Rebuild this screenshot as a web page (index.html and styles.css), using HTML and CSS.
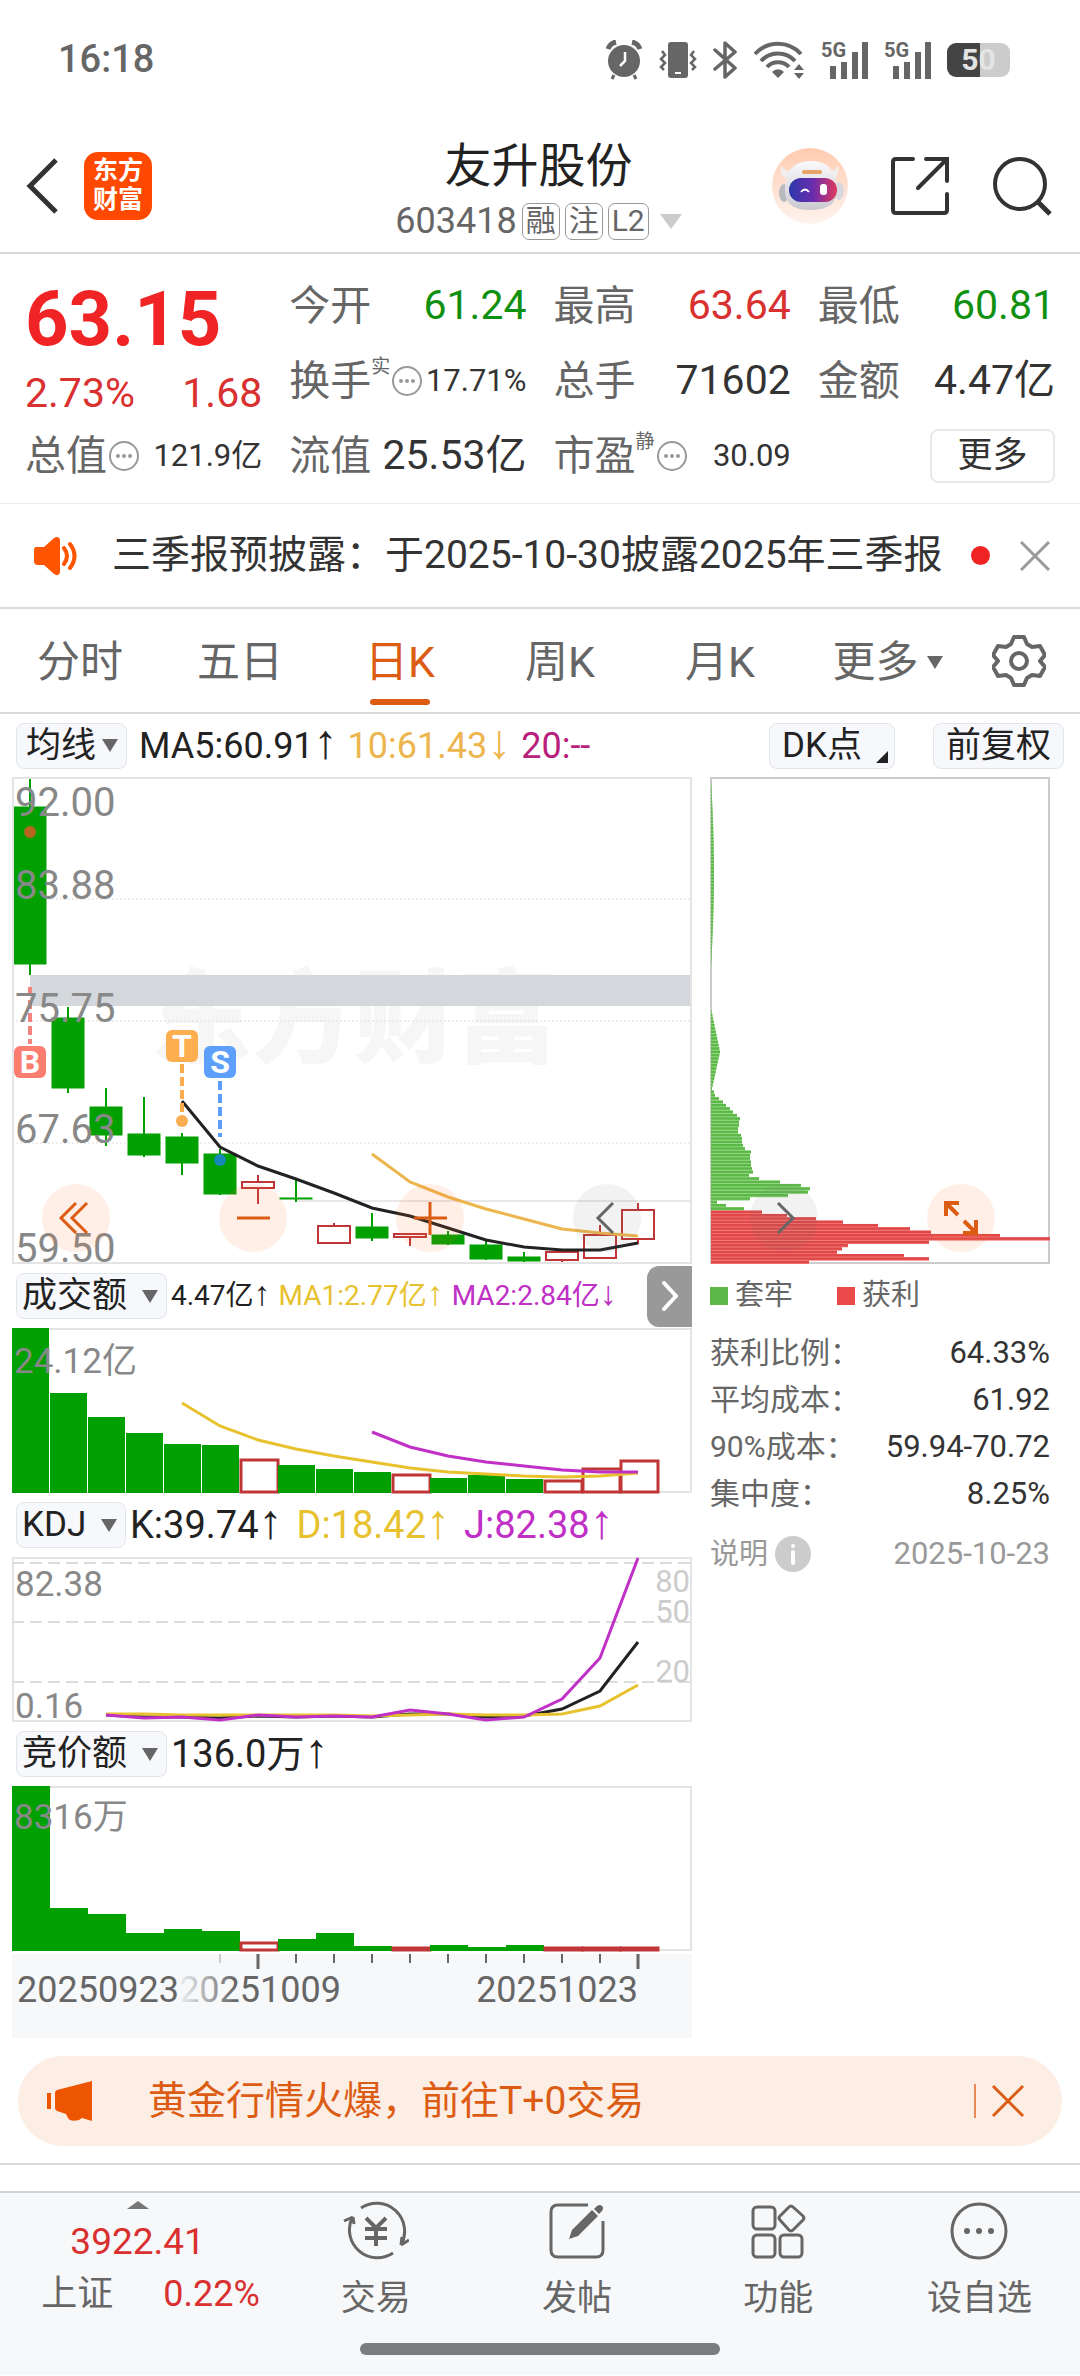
FILE: index.html
```html
<!doctype html>
<html lang="zh-CN">
    <head>
        <meta charset="UTF-8" />
        <meta name="viewport" content="width=device-width, initial-scale=1.0" />
        <title>友升股份 603418</title>
        <link rel="stylesheet" href="styles.css">
    </head>
    <body>
        <div class="status-bar">
            <span class="clock">16:18</span>
            <div class="status-icons">
                <svg width="38" height="40" viewBox="0 0 38 40">
                    <circle cx="19" cy="21" r="16" fill="#666" />
                    <path d="M3 9a11 11 0 0 1 8-7M35 9a11 11 0 0 0-8-7" stroke="#666" stroke-width="5" fill="none" />
                    <path d="M9 35l-2 4M29 35l2 4" stroke="#666" stroke-width="3" />
                    <path d="M20 12v9l-5 5" stroke="#fff" stroke-width="2.5" fill="none" />
                </svg>
                <svg width="38" height="38" viewBox="0 0 38 38">
                    <rect x="9" y="1" width="20" height="36" rx="3" fill="#666" />
                    <path d="M16 32h6" stroke="#fff" stroke-width="2" />
                    <path d="M3 10l3 4-4 4 4 4-4 4 3 3M35 10l-3 4 4 4-4 4 4 4-3 3" stroke="#666" stroke-width="2.5" fill="none" />
                </svg>
                <svg width="24" height="38" viewBox="0 0 24 38">
                    <path d="M2 9l20 18-10 9V2l10 9L2 28" stroke="#666" stroke-width="3.5" fill="none" stroke-linejoin="round" stroke-linecap="round" />
                </svg>
                <svg width="52" height="38" viewBox="0 0 52 38">
                    <g stroke="#666" stroke-width="4" fill="none">
                        <path d="M2 13a31 31 0 0 1 46 0M8 20a23 23 0 0 1 34 0M14 26a15 15 0 0 1 22 0" />
                    </g>
                    <path d="M19 31a8 8 0 0 1 12 0l-6 6z" fill="#666" />
                    <path d="M41 29l5-6 5 6zM41 32l5 6 5-6z" fill="#666" />
                </svg>
                <div class="signal">
                    <span>5G</span>
                    <svg width="38" height="38" viewBox="0 0 38 38">
                        <path d="M3 25v13M14 21v17M25 11v27M35 1v37" stroke="#666" stroke-width="6" />
                    </svg>
                </div>
                <div class="signal">
                    <span>5G</span>
                    <svg width="38" height="38" viewBox="0 0 38 38">
                        <path d="M3 25v13M14 21v17M25 11v27M35 1v37" stroke="#666" stroke-width="6" />
                    </svg>
                </div>
                <div class="battery"><span>50</span></div>
            </div>
        </div>

        <header class="header">
            <div class="header-left">
                <button class="icon-button" aria-label="返回">
                    <svg width="36" height="56" viewBox="0 0 36 56">
                        <path d="M31 2L5 28l26 26" stroke="#333" stroke-width="5" fill="none" />
                    </svg>
                </button>
                <a class="logo" href="#">东方<br>财富</a>
            </div>
            <div class="stock">
                <h1>友升股份</h1>
                <button class="stock-code">
                    <span>603418</span>
                    <span class="tag">融</span>
                    <span class="tag">注</span>
                    <span class="tag">L2</span>
                    <svg width="22" height="15" viewBox="0 0 22 15"><path d="M0 0h22L11 15z" fill="#ccc" /></svg>
                </button>
            </div>
            <div class="header-right">
                <button class="icon-button" aria-label="智能助手">
                    <svg width="76" height="76" viewBox="0 0 76 76">
                        <defs>
                            <linearGradient id="halo" x1="0" y1="0" x2="0" y2="1">
                                <stop offset="0" stop-color="#ffcbb0" />
                                <stop offset="1" stop-color="#fff4ee" />
                            </linearGradient>
                            <linearGradient id="shell" x1="0" y1="0" x2="0" y2="1">
                                <stop offset="0" stop-color="#fafafc" />
                                <stop offset="1" stop-color="#c9c9d0" />
                            </linearGradient>
                            <linearGradient id="visor" x1="0" y1="0" x2="1" y2="0">
                                <stop offset="0" stop-color="#2c38a8" />
                                <stop offset="0.5" stop-color="#6a2cae" />
                                <stop offset="1" stop-color="#e03a5c" />
                            </linearGradient>
                        </defs>
                        <circle cx="38" cy="38" r="38" fill="url(#halo)" />
                        <ellipse cx="12" cy="45" rx="5" ry="9" fill="#b9b9c0" />
                        <ellipse cx="67" cy="43" rx="5" ry="9" fill="#d8d8de" />
                        <path d="M9 17q2 5 9 6l-5 8q-6-5-4-14zM66 17q-1 5-8 6l5 8q5-6 3-14z" fill="#f3eeee" />
                        <path d="M13 44q-1-31 26-31 25 0 26 28 1 21-27 21-24 0-25-18z" fill="url(#shell)" />
                        <rect x="30" y="22" width="20" height="4" rx="2" fill="#e8a468" />
                        <rect x="17" y="30" width="48" height="24" rx="12" fill="url(#visor)" />
                        <path d="M29 44q4-5 8 0" stroke="#fff" stroke-width="2" fill="none" />
                        <rect x="48" y="36" width="7" height="11" rx="3" fill="#fff" />
                    </svg>
                </button>
                <button class="icon-button" aria-label="分享">
                    <svg width="60" height="60" viewBox="0 0 60 60">
                        <path d="M23 3H6q-3 0-3 3v48q0 3 3 3h48q3 0 3-3V38M36 3h21v22M57 3L28 32" stroke="#333" stroke-width="4" fill="none" stroke-linecap="round" />
                    </svg>
                </button>
                <button class="icon-button" aria-label="搜索">
                    <svg width="60" height="60" viewBox="0 0 60 60">
                        <circle cx="28" cy="28" r="25" stroke="#333" stroke-width="4" fill="none" />
                        <path d="M46 46l12 12" stroke="#333" stroke-width="5" />
                    </svg>
                </button>
            </div>
        </header>

        <section class="quote">
            <div class="price up">
                <strong>63.15</strong>
                <div class="change"><span>2.73%</span><span>1.68</span></div>
            </div>
            <div class="stat"><span>今开</span><b class="down">61.24</b></div>
            <div class="stat"><span>最高</span><b class="up">63.64</b></div>
            <div class="stat"><span>最低</span><b class="down">60.81</b></div>
            <div class="stat">
                <span>换手<sup>实</sup></span>
                <i class="dots"></i>
                <b class="small">17.71%</b>
            </div>
            <div class="stat"><span>总手</span><b>71602</b></div>
            <div class="stat"><span>金额</span><b>4.47亿</b></div>
            <div class="stat">
                <span>总值</span>
                <i class="dots"></i>
                <b class="small">121.9亿</b>
            </div>
            <div class="stat"><span>流值</span><b>25.53亿</b></div>
            <div class="stat">
                <span>市盈<sup>静</sup></span>
                <i class="dots"></i>
                <b class="small">30.09</b>
            </div>
            <div class="stat more"><button>更多</button></div>
        </section>

        <section class="notice">
            <svg width="46" height="40" viewBox="0 0 46 40">
                <path d="M2 11h8l10-9q5-3 6 2v32q-1 5-6 2l-10-9H4q-4 0-4-4V15q0-4 2-4z" fill="#ff5500" />
                <path d="M30 12q6 8 0 16M36 8q9 12 0 24" stroke="#ff5500" stroke-width="4" fill="none" stroke-linecap="round" />
            </svg>
            <a href="#">三季报预披露：于2025-10-30披露2025年三季报</a>
            <i class="dot"></i>
            <button class="icon-button" aria-label="关闭">
                <svg width="30" height="30" viewBox="0 0 30 30"><path d="M1 1l28 28M29 1L1 29" stroke="#999" stroke-width="3" /></svg>
            </button>
        </section>

        <nav class="tabs">
            <button>分时</button>
            <button>五日</button>
            <button class="active">日K</button>
            <button>周K</button>
            <button>月K</button>
            <button>更多<i class="caret"></i></button>
            <button class="gear" aria-label="设置">
                <svg width="54" height="54" viewBox="0 0 54 54" stroke="#666" stroke-width="4" fill="none" stroke-linejoin="round">
                    <path d="M22 3h10l3 7 5 3 8-1 5 9-5 6 5 6-5 9-8-1-5 3-3 7H22l-3-7-5-3-8 1-5-9 5-6-5-6 5-9 8 1 5-3z" />
                    <circle cx="27" cy="27" r="8" />
                </svg>
            </button>
        </nav>

        <div class="ma-bar">
            <label class="picker tight">
                <select aria-label="主图指标"><option>均线</option></select>
                <i class="caret"></i>
            </label>
            <p class="values">
                <span>MA5:60.91<em>↑</em></span>
                <span class="amber">10:61.43<em>↓</em></span>
                <span class="plum">20:--</span>
            </p>
            <button class="chip corner">DK点</button>
            <button class="chip">前复权</button>
        </div>

        <main class="content">
            <div class="charts">
                <div class="chart">
                    <svg id="candles" viewBox="0 0 680 487">
                        <text class="watermark" x="138" y="278">东方财富</text>
                        <g class="dotted">
                            <path d="M0 122H680M0 244H680M0 366H680" />
                        </g>
                        <path d="M284 424H680" stroke="#d0d0d0" />
                        <rect x="18" y="198" width="662" height="31" fill="#d4d7dc" />
                        <g id="candleBars"></g>
                        <polyline id="ma10" class="line" stroke="#edb54d" />
                        <polyline id="ma5" class="line" stroke="#222" />
                        <g class="marks">
                            <path d="M18 210V267" stroke="#f4837d" />
                            <path d="M170 287V343" stroke="#f9ab4d" />
                            <path d="M208 304V360" stroke="#5c9df5" />
                        </g>
                        <circle cx="18" cy="55" r="6" fill="#b5651d" />
                        <circle cx="170" cy="344" r="6" fill="#fbae51" />
                        <circle cx="208" cy="383" r="6" fill="#1888b8" />
                        <g class="badges">
                            <rect x="2" y="269" width="32" height="32" rx="6" fill="#fb7d70" />
                            <text x="18" y="296">B</text>
                            <rect x="154" y="253" width="32" height="32" rx="6" fill="#fdae4e" />
                            <text x="170" y="280">T</text>
                            <rect x="192" y="269" width="32" height="32" rx="6" fill="#5e9ffb" />
                            <text x="208" y="296">S</text>
                        </g>
                        <g class="scale">
                            <text x="3" y="39">92.00</text>
                            <text x="3" y="122">83.88</text>
                            <text x="3" y="245">75.75</text>
                            <text x="3" y="366">67.63</text>
                            <text x="3" y="485">59.50</text>
                        </g>
                        <rect class="frame" x="1" y="1" width="678" height="485" />
                    </svg>
                    <div class="chart-tools">
                        <button aria-label="快退">
                            <svg width="68" height="68" viewBox="0 0 68 68"><path d="M34 19L19 34l15 15M45 19L30 34l15 15" stroke="#dc5c14" stroke-width="3" fill="none" /></svg>
                        </button>
                        <button aria-label="缩小">
                            <svg width="68" height="68" viewBox="0 0 68 68"><path d="M18 34H51" stroke="#dc5c14" stroke-width="3" /></svg>
                        </button>
                        <button aria-label="放大">
                            <svg width="68" height="68" viewBox="0 0 68 68"><path d="M18 34H51M34 18V51" stroke="#dc5c14" stroke-width="3" /></svg>
                        </button>
                        <button class="grey" aria-label="左移">
                            <svg width="68" height="68" viewBox="0 0 68 68"><path d="M40 19L25 34l15 15" stroke="#666" stroke-width="3" fill="none" /></svg>
                        </button>
                    </div>
                </div>

                <div class="chart-head narrow">
                    <label class="picker">
                        <select aria-label="副图指标一"><option>成交额</option></select>
                        <i class="caret"></i>
                    </label>
                    <p class="values">
                        <span>4.47亿<em>↑</em></span>
                        <span class="yellow">MA1:2.77亿<em>↑</em></span>
                        <span class="purple">MA2:2.84亿<em>↓</em></span>
                    </p>
                    <button class="expand" aria-label="更多指标">
                        <svg width="16" height="30" viewBox="0 0 16 30"><path d="M2 2l12 13L2 28" stroke="#fff" stroke-width="4" fill="none" stroke-linecap="round" /></svg>
                    </button>
                </div>
                <svg viewBox="0 0 680 165">
                    <rect class="frame" x="1" y="1" width="678" height="163" />
                    <g id="volumeBars"></g>
                    <polyline id="volumeMa1" class="line" stroke="#e8c22e" />
                    <polyline id="volumeMa2" class="line" stroke="#c02fc6" />
                    <text class="scale" x="2" y="45">24.12亿</text>
                </svg>

                <div class="chart-head">
                    <label class="picker">
                        <select aria-label="副图指标二"><option>KDJ</option></select>
                        <i class="caret"></i>
                    </label>
                    <p class="values">
                        <span>K:39.74<em>↑</em></span>
                        <span class="yellow">D:18.42<em>↑</em></span>
                        <span class="purple">J:82.38<em>↑</em></span>
                    </p>
                </div>
                <svg viewBox="0 0 680 165">
                    <rect class="frame" x="1" y="1" width="678" height="163" />
                    <path class="dashed" d="M0 6H680M0 65H680M0 125H680" />
                    <g class="levels">
                        <text x="678" y="35">80</text>
                        <text x="678" y="65">50</text>
                        <text x="678" y="125">20</text>
                    </g>
                    <text class="scale" x="3" y="39">82.38</text>
                    <text class="scale" x="3" y="161">0.16</text>
                    <polyline id="kLine" class="line" stroke="#222" />
                    <polyline id="dLine" class="line" stroke="#e8c22e" />
                    <polyline id="jLine" class="line" stroke="#c02fc6" />
                </svg>

                <div class="chart-head">
                    <label class="picker">
                        <select aria-label="副图指标三"><option>竞价额</option></select>
                        <i class="caret"></i>
                    </label>
                    <p class="values"><span>136.0万<em>↑</em></span></p>
                </div>
                <svg viewBox="0 0 680 165">
                    <rect class="frame" x="1" y="1" width="678" height="163" />
                    <g id="auctionBars"></g>
                    <text class="scale" x="2" y="43">8316万</text>
                </svg>
                <svg class="axis" viewBox="0 0 680 84">
                    <defs>
                        <linearGradient id="fade">
                            <stop offset="0" stop-color="#f7f8fa" />
                            <stop offset="1" stop-color="#f7f8fa" stop-opacity="0" />
                        </linearGradient>
                    </defs>
                    <g id="ticks"></g>
                    <text x="329" y="48" text-anchor="end">20251009</text>
                    <rect x="164" y="0" width="60" height="84" fill="url(#fade)" />
                    <text x="5" y="48">20250923</text>
                    <text x="626" y="48" text-anchor="end">20251023</text>
                </svg>
            </div>

            <aside class="costs">
                <div class="chart">
                    <svg viewBox="0 0 340 487">
                        <rect x="1" y="1" width="338" height="485" fill="none" stroke="#ccc" stroke-width="2" />
                        <g id="chipBars"></g>
                    </svg>
                    <div class="chart-tools">
                        <button class="grey" aria-label="右移">
                            <svg width="68" height="68" viewBox="0 0 68 68"><path d="M28 19l15 15-15 15" stroke="#666" stroke-width="3" fill="none" /></svg>
                        </button>
                        <button aria-label="全屏">
                            <svg width="68" height="68" viewBox="0 0 68 68"><path d="M32 19H19v13M19 19l12 12M37 37l12 12M49 36v13H36" stroke="#dc5c14" stroke-width="4" fill="none" /></svg>
                        </button>
                    </div>
                </div>
                <div class="legend">
                    <span class="stuck">套牢</span>
                    <span class="profit">获利</span>
                </div>
                <dl>
                    <div><dt>获利比例：</dt><dd>64.33%</dd></div>
                    <div><dt>平均成本：</dt><dd>61.92</dd></div>
                    <div><dt>90%成本：</dt><dd>59.94-70.72</dd></div>
                    <div><dt>集中度：</dt><dd>8.25%</dd></div>
                </dl>
                <div class="costs-foot">
                    <button>
                        说明
                        <svg width="36" height="36" viewBox="0 0 36 36">
                            <circle cx="18" cy="18" r="18" fill="#ccc" />
                            <circle cx="18" cy="10" r="2" fill="#fff" />
                            <path d="M18 16v11" stroke="#fff" stroke-width="4" stroke-linecap="round" />
                        </svg>
                    </button>
                    <time>2025-10-23</time>
                </div>
            </aside>
        </main>

        <div class="banner">
            <svg width="48" height="40" viewBox="0 0 48 40">
                <path d="M3 12v16" stroke="#ee5500" stroke-width="4" />
                <path d="M9 12q0-2 2-3L46 0v40l-10-3-3 2q-9 2-11-2l-2-4-9-3q-2-1-2-3z" fill="#ee5500" />
            </svg>
            <a href="#">黄金行情火爆，前往T+0交易</a>
            <button aria-label="关闭广告">
                <svg width="34" height="34" viewBox="0 0 34 34"><path d="M2 2l30 30M32 2L2 32" stroke="#dc5c14" stroke-width="3" /></svg>
            </button>
        </div>

        <footer class="bottom">
            <nav class="bottom-nav">
                <a class="index" href="#">
                    <svg width="22" height="8" viewBox="0 0 22 8"><path d="M11 0l11 8H0z" fill="#777" /></svg>
                    <span class="up">3922.41</span>
                    <span class="index-row"><span>上证</span><span class="up">0.22%</span></span>
                </a>
                <a href="#">
                    <svg width="66" height="60" viewBox="0 0 66 60" stroke="#666" stroke-width="3" fill="none">
                        <path d="M18 7a28 28 0 0 1 40 37M58 44l8-5M58 44l1-8M50 52A28 28 0 0 1 9 17M10 16l-9 4M10 16l1 7" />
                        <path d="M23 17l10 10 10-10M33 27v18M22 28h22M22 37h22" stroke-width="4" />
                    </svg>
                    交易
                </a>
                <a href="#">
                    <svg width="60" height="60" viewBox="0 0 60 60" stroke="#666" stroke-width="3" fill="none">
                        <path d="M41 4H11q-7 0-7 7v38q0 7 7 7h38q7 0 7-7V20" />
                        <path d="M22 38l3-9 20-20 6 6-20 20z" fill="#666" stroke="none" />
                        <path d="M47 8l3-3q3-2 5 0t0 5l-3 3z" fill="#666" stroke="none" />
                    </svg>
                    发帖
                </a>
                <a href="#">
                    <svg width="60" height="60" viewBox="0 0 60 60" stroke="#666" stroke-width="3" fill="none">
                        <rect x="5" y="6" width="22" height="22" rx="4" />
                        <rect x="5" y="34" width="22" height="22" rx="4" />
                        <rect x="32" y="34" width="22" height="22" rx="4" />
                        <path d="M41 6q2-2 4 0l10 9q2 2 0 4l-10 10q-2 2-4 0L32 19q-2-2 0-4z" />
                    </svg>
                    功能
                </a>
                <a href="#">
                    <svg width="60" height="60" viewBox="0 0 60 60">
                        <circle cx="30" cy="30" r="27" stroke="#666" stroke-width="3" fill="none" />
                        <circle cx="18" cy="30" r="3" fill="#666" />
                        <circle cx="30" cy="30" r="3" fill="#666" />
                        <circle cx="42" cy="30" r="3" fill="#666" />
                    </svg>
                    设自选
                </a>
            </nav>
            <div class="home-bar"></div>
        </footer>

        <script src="script.js"></script>
    </body>
</html>
```
FILE: styles.css
```css
* {
    box-sizing: border-box;
}
body {
    margin: 0;
    font-family: Roboto, "Noto Sans CJK SC", sans-serif;
    font-size: 36px;
    line-height: 1.2;
    background-color: #fff;
    color: #333;
}
button,
select {
    font: inherit;
    color: inherit;
    background: none;
    border: none;
    padding: 0;
    margin: 0;
    cursor: pointer;
}
a {
    color: inherit;
    text-decoration: none;
}
svg {
    display: block;
    flex-shrink: 0;
}
.icon-button {
    display: block;
}
.up {
    color: #d93030;
}
.down {
    color: #109010;
}
.amber {
    color: #edb54d;
}
.plum {
    color: #b8207c;
}
.yellow {
    color: #e8c22e;
}
.purple {
    color: #c02fc6;
}

/* status bar */
.status-bar {
    display: flex;
    align-items: center;
    justify-content: space-between;
    height: 120px;
    padding: 0 70px 0 58px;
}
.clock {
    font-size: 38px;
    font-weight: 500;
    color: #666;
}
.status-icons {
    display: flex;
    align-items: center;
    gap: 16px;
}
.signal {
    position: relative;
    padding-left: 9px;
}
.signal span {
    position: absolute;
    left: 0;
    top: 0;
    font-size: 20px;
    line-height: 18px;
    font-weight: 700;
    color: #666;
}
.battery {
    width: 63px;
    height: 34px;
    border-radius: 9px;
    background: linear-gradient(90deg, #444 52%, #ccc 52%);
    color: #e4e4e4;
    font-size: 30px;
    line-height: 34px;
    font-weight: 700;
    text-align: center;
}

/* header */
.header {
    display: grid;
    grid-template-columns: 1fr auto 1fr;
    align-items: center;
    height: 134px;
    padding: 0 28px 0 25px;
    border-bottom: 2px solid #d8dadc;
}
.header-left,
.header-right {
    display: flex;
    align-items: center;
}
.header-left {
    gap: 23px;
}
.header-right {
    justify-content: flex-end;
    gap: 42px;
}
.logo {
    width: 68px;
    height: 68px;
    padding: 4px 0;
    border-radius: 14px;
    background-color: #ff4800;
    color: #fff;
    font-size: 25px;
    line-height: 29px;
    font-weight: 700;
    text-align: center;
}
.stock {
    display: flex;
    flex-direction: column;
    align-items: center;
}
.stock h1 {
    margin: 6px 0 6px;
    font-size: 47px;
    line-height: 58px;
    font-weight: 400;
    color: #222;
}
.stock-code {
    display: flex;
    align-items: center;
    gap: 5px;
    line-height: 40px;
    color: #666;
}
.tag {
    height: 37px;
    padding: 0 3px;
    border: 1px solid #999;
    border-radius: 7px;
    font-size: 30px;
    line-height: 34px;
}
.stock-code svg {
    margin-left: 6px;
}

/* quote */
.quote {
    display: grid;
    grid-template-columns: repeat(4, 1fr);
    grid-template-rows: repeat(3, 75px);
    column-gap: 27px;
    padding: 14px 25px 10px;
    border-bottom: 1px solid #e8eaec;
}
.price {
    grid-row: span 2;
    padding-top: 7px;
}
.price strong {
    display: block;
    font-size: 76px;
    line-height: 88px;
    color: #f02424;
}
.change {
    display: flex;
    justify-content: space-between;
    font-size: 41px;
    line-height: 60px;
}
.stat {
    display: flex;
    align-items: center;
    white-space: nowrap;
}
.stat span {
    font-size: 41px;
    line-height: 60px;
    color: #666;
}
.stat sup {
    font-size: 19px;
    line-height: 20px;
    vertical-align: 22px;
}
.stat b {
    margin-left: auto;
    font-size: 41px;
    font-weight: 400;
}
.stat .small {
    font-size: 31px;
}
.dots {
    display: flex;
    align-items: center;
    justify-content: center;
    width: 30px;
    height: 30px;
    margin-left: 2px;
    border: 2px solid #999;
    border-radius: 50%;
}
.dots::before {
    content: "";
    width: 4px;
    height: 4px;
    border-radius: 50%;
    background-color: #999;
    box-shadow: -6px 0 #999, 6px 0 #999;
}
.more {
    justify-content: flex-end;
}
.more button {
    width: 125px;
    height: 54px;
    border: 2px solid #e6e9ea;
    border-radius: 8px;
    font-size: 35px;
    line-height: 46px;
}

/* notice */
.notice {
    display: flex;
    align-items: center;
    height: 105px;
    padding: 0 30px 0 34px;
    border-bottom: 2px solid #d8dadc;
}
.notice a {
    flex: 1;
    padding-left: 32px;
    font-size: 39px;
    white-space: nowrap;
    overflow: hidden;
}
.dot {
    width: 19px;
    height: 19px;
    margin: 0 30px 0 16px;
    border-radius: 50%;
    background-color: #f02424;
}

/* tabs */
.tabs {
    display: grid;
    grid-template-columns: repeat(5, 160fr) 175fr 105fr;
    height: 105px;
    border-bottom: 2px solid #d8dadc;
    color: #666;
}
.tabs button {
    display: flex;
    align-items: center;
    justify-content: center;
    position: relative;
    padding-top: 4px;
    font-size: 43px;
}
.tabs .active {
    color: #dc5c14;
}
.tabs .active::after {
    content: "";
    position: absolute;
    left: 50%;
    bottom: 7px;
    width: 60px;
    height: 6px;
    margin-left: -30px;
    border-radius: 3px;
    background-color: #dc5c14;
}
.tabs .gear {
    padding: 0 18px 0 0;
}
.caret {
    border: 8px solid transparent;
    border-top: 13px solid #666;
    border-bottom: none;
}
.tabs .caret {
    margin-left: 8px;
}

/* indicator rows */
.ma-bar,
.chart-head {
    display: flex;
    align-items: center;
    height: 64px;
}
.ma-bar {
    height: 63px;
    padding: 0 16px;
}
.chart-head {
    padding-left: 4px;
    font-size: 38px;
}
.picker,
.chip {
    height: 46px;
    border: 1px solid #e2e5ea;
    border-radius: 8px;
    background-color: #f7f8fb;
    color: #222;
    font-size: 35px;
    line-height: 42px;
}
.picker {
    display: flex;
    align-items: center;
    gap: 14px;
    padding: 0 8px 0 5px;
}
.picker.tight {
    gap: 5px;
    padding-left: 9px;
}
.picker select {
    appearance: none;
    height: 44px;
}
.chip {
    padding: 0 12px;
    margin-left: 38px;
}
.values {
    display: flex;
    flex: 1;
    gap: 14px;
    margin: 0 0 0 12px;
    color: #222;
    line-height: 46px;
    white-space: nowrap;
}
.values .amber {
    color: #edb54d;
}
.values .plum {
    color: #b8207c;
}
.values .yellow {
    color: #e8c22e;
}
.values .purple {
    color: #c02fc6;
}
.values em {
    font-family: "Liberation Sans", sans-serif;
    font-style: normal;
    font-size: 48px;
    line-height: 36px;
}
.ma-bar .values {
    gap: 10px;
}
.chart-head .values {
    margin-left: 4px;
}
.narrow .values {
    font-size: 28px;
    gap: 8px;
}
.narrow .values em {
    font-size: 34px;
}
.chip.corner {
    position: relative;
    padding-right: 32px;
}
.corner::after {
    content: "";
    position: absolute;
    right: 6px;
    bottom: 5px;
    border-left: 12px solid transparent;
    border-bottom: 12px solid #222;
}
.expand {
    display: flex;
    align-items: center;
    justify-content: center;
    width: 45px;
    height: 61px;
    border-radius: 12px 0 0 12px;
    background-color: #999;
}

/* charts */
.content {
    display: grid;
    grid-template-columns: 2fr 1fr;
    column-gap: 18px;
    padding: 0 30px 0 12px;
}
.charts > svg,
.chart > svg {
    width: 100%;
    height: auto;
    overflow: visible;
}
.chart {
    position: relative;
}
.chart-tools {
    position: absolute;
    left: 30px;
    right: 51px;
    bottom: 12px;
    display: flex;
    justify-content: space-between;
}
.costs .chart-tools {
    left: 40px;
    right: 55px;
}
.chart-tools button {
    width: 68px;
    height: 68px;
    border-radius: 50%;
    background-color: rgba(255, 110, 40, 0.11);
}
.chart-tools .grey {
    background-color: rgba(110, 110, 110, 0.09);
}
.frame {
    fill: none;
    stroke: #e4e4e4;
    stroke-width: 2px;
}
.line {
    fill: none;
    stroke-width: 3px;
}
.dotted {
    stroke: #dcdcdc;
    stroke-dasharray: 2 2;
}
.dashed {
    stroke: #dcdcdc;
    stroke-width: 2px;
    stroke-dasharray: 12 6;
}
.marks {
    stroke-width: 4px;
    stroke-dasharray: 9 4;
}
.badges text {
    fill: #fff;
    font-size: 32px;
    font-weight: 700;
    text-anchor: middle;
}
.scale {
    fill: #888;
    font-size: 35px;
}
g.scale {
    font-size: 40px;
}
.levels {
    fill: #ccc;
    font-size: 31px;
    text-anchor: end;
}
.watermark {
    fill: #f6f6f6;
    font-size: 102px;
    font-weight: 900;
}
.axis {
    margin-top: 3px;
    background-color: #f7f8fa;
    fill: #666;
    font-size: 36px;
}
.green {
    fill: #00a000;
    stroke: #00a000;
}
.red {
    fill: #fff;
    stroke: #c03636;
}

/* cost panel */
.legend {
    display: flex;
    gap: 44px;
    height: 62px;
    align-items: center;
    font-size: 29px;
    color: #666;
}
.legend span::before {
    content: "";
    display: inline-block;
    width: 18px;
    height: 18px;
    margin-right: 7px;
    background-color: #5cb947;
}
.legend .profit::before {
    background-color: #ea4a4a;
}
.costs dl {
    margin: 3px 0 0;
}
.costs dl div {
    display: flex;
    justify-content: space-between;
    line-height: 47px;
}
.costs dt {
    font-size: 30px;
    color: #666;
}
.costs dd {
    margin: 0;
    font-size: 31px;
}
.costs-foot {
    display: flex;
    align-items: center;
    justify-content: space-between;
    height: 74px;
    font-size: 31px;
    color: #999;
}
.costs-foot button {
    display: flex;
    align-items: center;
    gap: 7px;
    font-size: 29px;
}

/* banner */
.banner {
    display: flex;
    align-items: center;
    height: 90px;
    margin: 18px 18px 17px;
    padding: 0 37px 0 28px;
    border-radius: 45px;
    background-color: #fdeee5;
    color: #dc5c14;
    font-size: 39px;
}
.banner a {
    flex: 1;
    padding-left: 54px;
}
.banner button {
    padding-left: 15px;
    border-left: 2px solid #e88a58;
}

/* bottom bar */
.bottom {
    padding-top: 26px;
    border-top: 2px solid #d8dadc;
}
.bottom-nav {
    display: grid;
    grid-template-columns: 275fr repeat(4, 201fr);
    height: 152px;
    padding-top: 8px;
    border-top: 2px solid #d0d3d6;
    background-color: #f7f8fa;
    color: #666;
}
.bottom-nav a {
    display: flex;
    flex-direction: column;
    align-items: center;
    gap: 12px;
    font-size: 35px;
    line-height: 52px;
}
.bottom-nav .index {
    gap: 0;
    font-size: 37px;
}
.index svg {
    margin-bottom: 7px;
}
.index-row {
    display: flex;
    gap: 50px;
    padding-left: 26px;
    font-size: 36px;
}
.home-bar {
    height: 32px;
    background-color: #f7f8fa;
}
.home-bar::before {
    content: "";
    display: block;
    width: 360px;
    height: 12px;
    margin: 0 auto;
    border-radius: 6px;
    background-color: #7b7c7e;
}
```
FILE: script.js
```js
const SVG = "http://www.w3.org/2000/svg";
const STEP = 38;

function add(parent, name, attrs) {
    const node = document.createElementNS(SVG, name);
    for (const key in attrs) node.setAttribute(key, attrs[key]);
    document.getElementById(parent).appendChild(node);
}

// [open/close top, open/close bottom, high, low, rising]
const candles = [
    [30, 187, 0, 198], [241, 311, 230, 316], [330, 358, 311, 369],
    [357, 378, 320, 380], [360, 386, 356, 398], [377, 417, 372, 418],
    [405, 411, 398, 427, 1], [421, 422, 402, 425], [449, 466, 446, 466, 1],
    [450, 461, 436, 464], [457, 460, 456, 469, 1], [458, 467, 454, 468],
    [468, 482, 464, 483], [480, 484, 475, 486], [475, 483, 475, 486, 1],
    [458, 481, 448, 481, 1], [433, 462, 426, 467, 1],
];
candles.forEach(([top, bottom, high, low, rising], i) => {
    const x = 18 + i * STEP;
    const cls = rising ? "red" : "green";
    add("candleBars", "path", { d: `M${x} ${high}V${low}`, class: cls, "stroke-width": 2 });
    add("candleBars", "rect", {
        x: x - 16, y: top, width: 32, height: bottom - top,
        class: cls, "stroke-width": rising ? 2 : 1,
    });
});

function drawBars(id, tops, rising, width) {
    tops.forEach((top, i) => {
        if (rising.includes(i)) {
            add(id, "rect", { x: i * STEP + 1, y: top + 1, width: STEP - 1, height: Math.max(163 - top, 2), class: "red", "stroke-width": 3 });
        } else {
            add(id, "rect", { x: i * STEP, y: top, width: width, height: 165 - top, fill: "#00a000" });
        }
    });
}
drawBars("volumeBars", [0, 65, 89, 105, 116, 117, 131, 137, 141, 144, 146, 150, 147, 151, 152, 140, 132], [6, 10, 14, 15, 16], 37);
drawBars("auctionBars", [0, 122, 128, 147, 143, 145, 156, 153, 147, 160, 161, 159, 161, 159, 161, 161, 161], [6, 10, 14, 15, 16], 38);

function drawLine(id, start, values) {
    const points = values.map((y, i) => `${18 + (start + i) * STEP},${y}`);
    document.getElementById(id).setAttribute("points", points.join(" "));
}
drawLine("ma5", 4, [324, 370, 389, 402, 416, 431, 439, 451, 463, 470, 473, 473, 466]);
drawLine("ma10", 9, [377, 405, 420, 432, 442, 452, 456, 459]);
drawLine("volumeMa1", 4, [75, 98, 112, 121, 128, 134, 140, 144, 146, 148, 149, 148, 145]);
drawLine("volumeMa2", 9, [104, 119, 128, 134, 138, 142, 144, 144]);
drawLine("kLine", 2, [158, 160, 160, 161, 159, 160, 159, 160, 157, 157, 160, 159, 152, 134, 85]);
drawLine("dLine", 2, [157, 157, 158, 158, 158, 158, 158, 159, 158, 157, 158, 158, 157, 149, 128]);
drawLine("jLine", 2, [158, 161, 160, 163, 158, 160, 159, 160, 153, 157, 163, 160, 142, 101, 1]);

for (let i = 5; i < 17; i++) {
    const major = i === 6 || i === 16;
    add("ticks", "path", {
        d: `M${18 + i * STEP} 0V${major ? 15 : 9}`,
        stroke: i === 5 ? "#bbb" : "#666",
        "stroke-width": major ? 3 : 2,
    });
}

// cost distribution, one bar per price step from the top down
const chips = [];
for (let i = 0; i < 94; i++) {
    let width = 0;
    if (i < 57) width = 3 * Math.sin((Math.PI * i) / 57);
    else if (i >= 70 && i < 82) width = ((i - 69) * 9) / 13;
    else if (i >= 82) width = 9 - ((i - 82) * 8) / 11;
    chips.push(width);
}
chips.push(3, 4, 8, 12, 15, 19, 22, 26, 29, 28, 28, 27, 27, 30, 31, 31, 32, 34, 40, 39, 39, 40, 40, 41, 42, 38, 48, 69, 90, 99, 97, 77, 39, 6, 15, 33);
const firstProfit = chips.length;
chips.push(51, 76, 105, 132, 167, 199, 220, 289, 339, 218, 137, 131, 126, 193, 218, 98);
const rowHeight = 487 / chips.length;
chips.forEach((width, i) => {
    const profit = i >= firstProfit;
    const y = i * rowHeight;
    add("chipBars", "rect", { x: 1, y: y, width: width, height: rowHeight, fill: profit ? "#f87474" : "#9ad98a" });
    add("chipBars", "rect", { x: 1, y: y, width: width, height: 2.5, fill: profit ? "#df4848" : "#5cb947" });
});
```
